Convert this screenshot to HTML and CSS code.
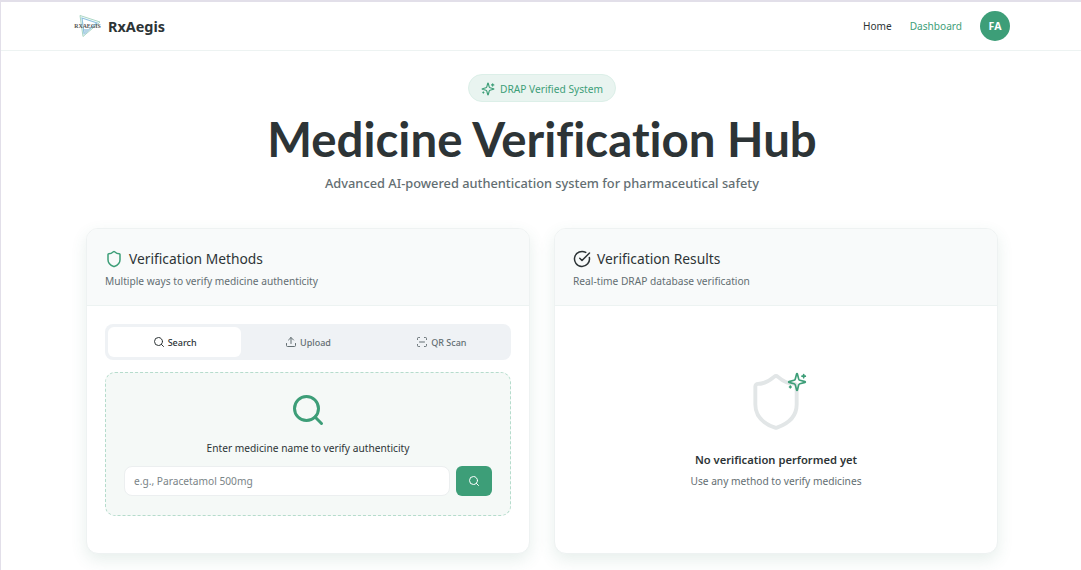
FILE: index.html
```html
<!DOCTYPE html>
<html lang="en">
<head>
    <meta charset="UTF-8">
    <meta name="viewport" content="width=device-width, initial-scale=1.0">
    <title>RxAegis - Medicine Verification Hub</title>
    <link rel="stylesheet" href="styles.css">
</head>
<body>

    <nav class="navbar">
        <a class="brand" href="#">
            <svg class="brand-logo" viewBox="0 0 30 24" width="30" height="24" fill="none">
                <path d="M7 1.5 L27 8 L10 22.5 Z" stroke="#a9d6c4" stroke-width="1"/>
                <path d="M9 4 L24 9 L11 19.5 Z" stroke="#8fc3e0" stroke-width="1.2"/>
                <path d="M11 15 L18 15 L11.5 21 Z" fill="#b5d4e6"/>
                <text x="14.5" y="14" text-anchor="middle" class="brand-logo-text">RXAEGIS</text>
            </svg>
            <span class="brand-name">RxAegis</span>
        </a>
        <div class="nav-links">
            <a class="nav-link" href="#">Home</a>
            <a class="nav-link active" href="#">Dashboard</a>
            <div class="avatar">FA</div>
        </div>
    </nav>

    <main class="page">
        <header class="hero">
            <div class="hero-badge">
                <svg class="icon-14" viewBox="0 0 24 24" fill="none" stroke="currentColor" stroke-width="2" stroke-linecap="round" stroke-linejoin="round">
                    <path d="M9.937 15.5A2 2 0 0 0 8.5 14.063l-6.135-1.582a.5.5 0 0 1 0-.962L8.5 9.936A2 2 0 0 0 9.937 8.5l1.582-6.135a.5.5 0 0 1 .963 0L14.063 8.5A2 2 0 0 0 15.5 9.937l6.135 1.581a.5.5 0 0 1 0 .964L15.5 14.063a2 2 0 0 0-1.437 1.437l-1.582 6.135a.5.5 0 0 1-.963 0z"/>
                    <path d="M20 3v4M22 5h-4M4 17v2M5 18H3"/>
                </svg>
                DRAP Verified System
            </div>
            <h1>Medicine Verification Hub</h1>
            <p>Advanced AI-powered authentication system for pharmaceutical safety</p>
        </header>

        <section class="cards">
            <div class="card">
                <div class="card-header">
                    <h2>
                        <svg class="icon-green icon-18" viewBox="0 0 24 24" fill="none" stroke="currentColor" stroke-width="2" stroke-linecap="round" stroke-linejoin="round">
                            <path d="M20 13c0 5-3.5 7.5-7.66 8.95a1 1 0 0 1-.67-.01C7.5 20.5 4 18 4 13V6a1 1 0 0 1 1-1c2 0 4.5-1.2 6.24-2.72a1.17 1.17 0 0 1 1.52 0C14.51 3.81 17 5 19 5a1 1 0 0 1 1 1z"/>
                        </svg>
                        Verification Methods
                    </h2>
                    <p>Multiple ways to verify medicine authenticity</p>
                </div>
                <div class="card-body">
                    <div class="tabs">
                        <button class="tab active" type="button">
                            <svg class="icon-12" viewBox="0 0 24 24" fill="none" stroke="currentColor" stroke-width="2" stroke-linecap="round" stroke-linejoin="round"><circle cx="11" cy="11" r="8"/><path d="m21 21-4.3-4.3"/></svg>
                            Search
                        </button>
                        <button class="tab" type="button">
                            <svg class="icon-12" viewBox="0 0 24 24" fill="none" stroke="currentColor" stroke-width="2" stroke-linecap="round" stroke-linejoin="round"><path d="M21 15v4a2 2 0 0 1-2 2H5a2 2 0 0 1-2-2v-4"/><path d="m17 8-5-5-5 5"/><path d="M12 3v12"/></svg>
                            Upload
                        </button>
                        <button class="tab" type="button">
                            <svg class="icon-12" viewBox="0 0 24 24" fill="none" stroke="currentColor" stroke-width="2" stroke-linecap="round" stroke-linejoin="round"><path d="M3 7V5a2 2 0 0 1 2-2h2"/><path d="M17 3h2a2 2 0 0 1 2 2v2"/><path d="M21 17v2a2 2 0 0 1-2 2h-2"/><path d="M7 21H5a2 2 0 0 1-2-2v-2"/><path d="M7 12h10"/></svg>
                            QR Scan
                        </button>
                    </div>
                    <div class="search-panel">
                        <svg class="icon-green search-big" viewBox="0 0 24 24" fill="none" stroke="currentColor" stroke-width="2" stroke-linecap="round" stroke-linejoin="round"><circle cx="11" cy="11" r="8"/><path d="m21 21-4.3-4.3"/></svg>
                        <div class="search-label">Enter medicine name to verify authenticity</div>
                        <div class="search-row">
                            <input class="search-input" type="text" placeholder="e.g., Paracetamol 500mg">
                            <button class="search-btn" type="button">
                                <svg class="icon-12" viewBox="0 0 24 24" fill="none" stroke="currentColor" stroke-width="2" stroke-linecap="round" stroke-linejoin="round"><circle cx="11" cy="11" r="8"/><path d="m21 21-4.3-4.3"/></svg>
                            </button>
                        </div>
                    </div>
                </div>
            </div>

            <div class="card">
                <div class="card-header">
                    <h2>
                        <svg class="icon-18" viewBox="0 0 24 24" fill="none" stroke="currentColor" stroke-width="2" stroke-linecap="round" stroke-linejoin="round"><path d="M21.8 10A10 10 0 1 1 17 3.3"/><path d="m9 11 3 3L22 4"/></svg>
                        Verification Results
                    </h2>
                    <p>Real-time DRAP database verification</p>
                </div>
                <div class="card-body empty-state">
                    <div class="empty-icon">
                        <svg class="empty-shield" viewBox="0 0 24 24" fill="none" stroke="currentColor" stroke-width="1.5" stroke-linecap="round" stroke-linejoin="round">
                            <path d="M20 13c0 5-3.5 7.5-7.66 8.95a1 1 0 0 1-.67-.01C7.5 20.5 4 18 4 13V6a1 1 0 0 1 1-1c2 0 4.5-1.2 6.24-2.72a1.17 1.17 0 0 1 1.52 0C14.51 3.81 17 5 19 5a1 1 0 0 1 1 1z"/>
                        </svg>
                        <svg class="empty-spark" viewBox="0 0 24 24" fill="none" stroke="currentColor" stroke-width="2" stroke-linecap="round" stroke-linejoin="round">
                            <path d="M9.937 15.5A2 2 0 0 0 8.5 14.063l-6.135-1.582a.5.5 0 0 1 0-.962L8.5 9.936A2 2 0 0 0 9.937 8.5l1.582-6.135a.5.5 0 0 1 .963 0L14.063 8.5A2 2 0 0 0 15.5 9.937l6.135 1.581a.5.5 0 0 1 0 .964L15.5 14.063a2 2 0 0 0-1.437 1.437l-1.582 6.135a.5.5 0 0 1-.963 0z"/>
                            <path d="M20 3v4M22 5h-4M4 17v2M5 18H3"/>
                        </svg>
                    </div>
                    <div class="empty-title">No verification performed yet</div>
                    <div class="empty-text">Use any method to verify medicines</div>
                </div>
            </div>
        </section>
    </main>

</body>
</html>
```

FILE: styles.css
```css
* {
    box-sizing: border-box;
}
body {
    font-family: 'Noto Sans', sans-serif;
    background-color: #fff;
    color: #2d3436;
    margin: 0;
    border-top: 2px solid #e2dfe9;
    border-left: 1px solid #e2dfe9;
}
svg {
    display: block;
    flex-shrink: 0;
}
.navbar {
    display: flex;
    align-items: center;
    justify-content: space-between;
    height: 49px;
    padding: 0 71px 0 72px;
    border-bottom: 1px solid #edf3f2;
}
.brand {
    display: flex;
    align-items: center;
    gap: 5px;
    text-decoration: none;
    color: #2d3436;
}
.brand-logo-text {
    font-family: 'Liberation Serif', serif;
    font-size: 5.8px;
    font-weight: 700;
    fill: #555;
}
.brand-name {
    font-size: 14.4px;
    font-weight: 700;
}
.nav-links {
    display: flex;
    align-items: center;
}
.nav-link {
    font-size: 10.1px;
    color: #2d3436;
    text-decoration: none;
    margin-right: 18px;
}
.nav-link.active {
    color: #3d9e78;
}
.avatar {
    width: 30px;
    height: 30px;
    border-radius: 50%;
    background-color: #3d9e78;
    color: #fff;
    font-size: 10.5px;
    font-weight: 700;
    display: flex;
    align-items: center;
    justify-content: center;
}
.page {
    width: 912px;
    margin-left: 85px;
    padding-bottom: 30px;
}
.hero {
    display: flex;
    flex-direction: column;
    align-items: center;
    padding-top: 23px;
}
.hero-badge {
    display: flex;
    align-items: center;
    gap: 5px;
    height: 28px;
    padding: 1px 12px 0;
    border: 1px solid #dcefe8;
    border-radius: 14px;
    background-color: #e9f4f0;
    color: #3d9e78;
    font-size: 10.2px;
}
.icon-14 {
    width: 14px;
    height: 14px;
}
.icon-12 {
    width: 12px;
    height: 12px;
}
.icon-18 {
    width: 18px;
    height: 18px;
}
.icon-green {
    color: #3d9e78;
}
.hero h1 {
    font-family: 'Lato', sans-serif;
    font-size: 47.4px;
    font-weight: 700;
    font-variant-ligatures: none;
    line-height: 60px;
    margin: 7px 0 0;
}
.hero p {
    font-size: 12.8px;
    font-weight: 500;
    color: #636e72;
    margin: 5px 0 0;
}
.cards {
    display: grid;
    grid-template-columns: 1fr 1fr;
    gap: 24px;
    margin-top: 36px;
}
.card {
    height: 326px;
    background-color: #fff;
    border: 1px solid #eef2f2;
    border-radius: 12px;
    box-shadow: 0 6px 16px rgba(61, 120, 100, 0.12);
    overflow: hidden;
    display: flex;
    flex-direction: column;
}
.card-header {
    height: 77px;
    padding: 20px 18px 0;
    background-color: #f8fafa;
    border-bottom: 1px solid #edf3f2;
}
.card-header h2 {
    display: flex;
    align-items: center;
    gap: 6px;
    font-size: 13.8px;
    font-weight: 400;
    line-height: 20px;
    margin: 0;
}
.card-header p {
    font-size: 10.2px;
    color: #636e72;
    margin: 5px 0 0;
}
.card-body {
    padding: 18px 18px 0;
    flex: 1;
}
.tabs {
    display: grid;
    grid-template-columns: repeat(3, 1fr);
    height: 36px;
    padding: 3px;
    border-radius: 8px;
    background-color: #eff2f5;
}
.tab {
    display: flex;
    align-items: center;
    justify-content: center;
    gap: 3px;
    border: none;
    border-radius: 6px;
    background: none;
    color: #636e72;
    font-family: inherit;
    font-size: 9px;
    font-weight: 500;
}
.tab.active {
    background-color: #fff;
    color: #2d3436;
}
.search-panel {
    display: flex;
    flex-direction: column;
    align-items: center;
    height: 144px;
    margin-top: 12px;
    padding: 19px 18px 0;
    border: 1px dashed #b5dccc;
    border-radius: 10px;
    background-color: #f5f9f7;
}
.search-big {
    width: 36px;
    height: 36px;
}
.search-label {
    font-size: 10.2px;
    margin-top: 13px;
}
.search-row {
    display: flex;
    gap: 6px;
    width: 100%;
    margin-top: 11px;
}
.search-input {
    flex: 1;
    height: 30px;
    padding: 0 9px;
    border: 1px solid #eceff0;
    border-radius: 8px;
    background-color: #fff;
    font-family: inherit;
    font-size: 10.2px;
}
.search-input::placeholder {
    color: #7a8487;
}
.search-btn {
    display: flex;
    align-items: center;
    justify-content: center;
    width: 36px;
    height: 30px;
    border: none;
    border-radius: 6px;
    background-color: #3d9e78;
    color: #fff;
}
.empty-state {
    display: flex;
    flex-direction: column;
    align-items: center;
    padding-top: 65px;
}
.empty-icon {
    position: relative;
    width: 62px;
    height: 62px;
}
.empty-shield {
    width: 62px;
    height: 62px;
    color: #e2e6e7;
}
.empty-spark {
    position: absolute;
    top: 1px;
    left: 42px;
    width: 20px;
    height: 20px;
    color: #3d9e78;
}
.empty-title {
    font-size: 11.2px;
    font-weight: 600;
    margin-top: 19px;
}
.empty-text {
    font-size: 10.2px;
    color: #636e72;
    margin-top: 7px;
}
```
